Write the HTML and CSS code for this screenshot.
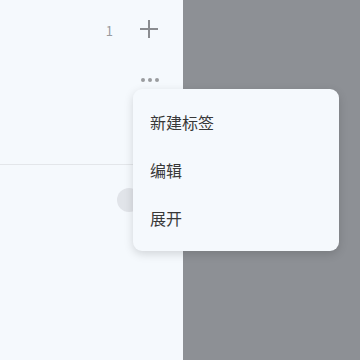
FILE: index.html
```html
<!DOCTYPE html>
<html lang="zh">

<head>
    <meta charset="UTF-8">
    <meta name="viewport" content="width=device-width, initial-scale=1.0">
    <title>标签</title>
    <link rel="stylesheet" href="styles.css">
</head>

<body>
    <div class="page">
        <div class="panel">
            <div class="topbar">
                <span class="count">1</span>
                <button class="iconBtn" type="button" aria-label="新建">
                    <svg width="20" height="20" viewBox="0 0 20 20">
                        <path d="M10 1v18M1 10h18" stroke="#8a8c90" stroke-width="2" fill="none" />
                    </svg>
                </button>
            </div>
            <div class="moreRow">
                <span class="more"><i></i><i></i><i></i></span>
            </div>
            <div class="divider"></div>
            <div class="listRow">
                <span class="knob"></span>
            </div>
        </div>
        <div class="mask"></div>
    </div>

    <ul class="menu">
        <li>新建标签</li>
        <li>编辑</li>
        <li>展开</li>
    </ul>
</body>

</html>
```

FILE: styles.css
```css
body {
    margin: 0;
    font-family: "Noto Sans CJK SC", "Noto Sans", sans-serif;
}
.page {
    display: flex;
    height: 360px;
}
.panel {
    width: 183px;
    background-color: #f5f9fd;
}
.mask {
    flex: 1;
    background-color: #8d9095;
}
.topbar {
    height: 58px;
    display: flex;
    align-items: center;
    justify-content: flex-end;
    padding-right: 24px;
}
.count {
    font-size: 13px;
    color: #9a9c9f;
    margin-right: 26px;
    margin-top: 2px;
}
.iconBtn {
    border: 0;
    padding: 0;
    background: none;
    width: 20px;
    height: 20px;
}
.iconBtn svg {
    display: block;
}
.moreRow {
    height: 106px;
    display: flex;
    justify-content: flex-end;
    padding-right: 24px;
}
.more {
    display: flex;
    gap: 3px;
    margin-top: 20px;
    height: 4px;
}
.more i {
    width: 4px;
    height: 4px;
    border-radius: 50%;
    background-color: #9a9c9f;
}
.divider {
    height: 1px;
    background-color: #e3e6ea;
}
.listRow {
    display: flex;
    justify-content: flex-end;
    padding-top: 23px;
    padding-right: 42px;
}
.knob {
    width: 24px;
    height: 24px;
    border-radius: 50%;
    background-color: #e1e4e9;
}
.menu {
    position: absolute;
    top: 89px;
    left: 133px;
    width: 206px;
    margin: 0;
    padding: 9px 0 9px;
    list-style: none;
    background-color: #f5f9fd;
    border-radius: 9px;
    box-shadow: 0 3px 10px rgba(0, 0, 0, 0.15);
}
.menu li {
    height: 48px;
    line-height: 48px;
    padding-left: 17px;
    font-size: 16px;
    color: #383838;
}
```
